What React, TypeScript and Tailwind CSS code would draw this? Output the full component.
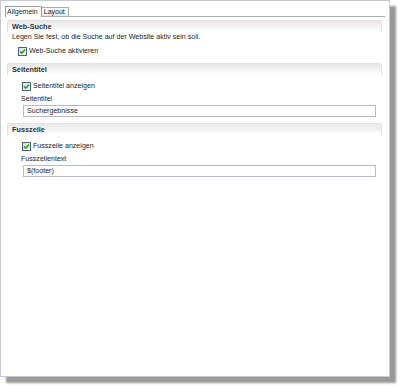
import React from 'react';

const font = { fontFamily: '"Liberation Sans", Arial, sans-serif' };

const Check: React.FC<{ label: string; indent: string }> = ({ label, indent }) => (
  <div className={`flex items-center h-[10px] ${indent}`}>
    <span className="w-[9px] h-[9px] border border-[#4d6478] bg-gradient-to-br from-[#dcdcd6] to-white flex items-center justify-center">
      <svg width="7" height="7" viewBox="0 0 7 7">
        <path d="M1 3.4 L2.8 5.2 L6 1.6" fill="none" stroke="#21a121" strokeWidth="1.6" />
      </svg>
    </span>
    <span className="ml-[2px] text-[7.1px] leading-[10px] text-[#1e1e1e]">{label}</span>
  </div>
);

const Header: React.FC<{ title: string; className?: string }> = ({ title, className = '' }) => (
  <div
    className={`ml-[6px] w-[375px] h-[12px] rounded-t-[2px] border-t border-x border-[#e2e2e2] bg-gradient-to-b from-[#e7e7e7] to-white pl-[4px] flex items-center ${className}`}
  >
    <span className="text-[7.3px] font-bold text-[#333] leading-[10px]">{title}</span>
  </div>
);

const Input: React.FC<{ value: string; className?: string }> = ({ value, className = '' }) => (
  <div
    className={`ml-[22px] w-[353px] h-[12px] border border-[#b5bcc7] bg-white pl-[3px] flex items-center text-[7.1px] text-[#1e1e1e] ${className}`}
  >
    {value}
  </div>
);

export default function App() {
  return (
    <div className="w-[400px] h-[387px] bg-white" style={font}>
      <div className="w-[390px] h-[377px] border border-[#c4c8d0] bg-white shadow-[6px_6px_2px_rgba(0,0,0,0.4)] flex flex-col">
        <div className="ml-[4px] mr-[4px] mt-[5px] h-[11px] flex items-end border-b border-[#a6aeb6]">
          <div className="h-[11px] -mb-px border border-b-0 border-[#919b9c] bg-white pl-[1px] pr-[3px] flex items-center text-[7px] text-[#1e1e1e]">
            Allgemein
          </div>
          <div className="h-[9px] border border-l-0 border-b-0 border-[#a6aeb6] bg-gradient-to-b from-white to-[#ecebe6] pl-[2px] pr-[3px] flex items-center text-[7px] text-[#1e1e1e]">
            Layout
          </div>
        </div>

        <Header title="Web-Suche" className="mt-[3px]" />
        <div className="ml-[11px] h-[10px] text-[7.1px] leading-[10px] text-[#1e1e1e]">
          Legen Sie fest, ob die Suche auf der Website aktiv sein soll.
        </div>
        <Check label="Web-Suche aktivieren" indent="ml-[17px] mt-[4px]" />

        <Header title="Seitentitel" className="mt-[7px]" />
        <Check label="Seitentitel anzeigen" indent="ml-[21px] mt-[6px]" />
        <div className="ml-[20px] mt-[3px] h-[10px] text-[7.1px] leading-[10px] text-[#1e1e1e]">Seitentitel</div>
        <Input value="Suchergebnisse" className="mt-[1px]" />

        <Header title="Fusszeile" className="mt-[6px]" />
        <Check label="Fusszeile anzeigen" indent="ml-[21px] mt-[6px]" />
        <div className="ml-[20px] mt-[3px] h-[10px] text-[7.1px] leading-[10px] text-[#1e1e1e]">Fusszeilentext</div>
        <Input value="$(footer)" className="mt-[1px]" />
      </div>
    </div>
  );
}
